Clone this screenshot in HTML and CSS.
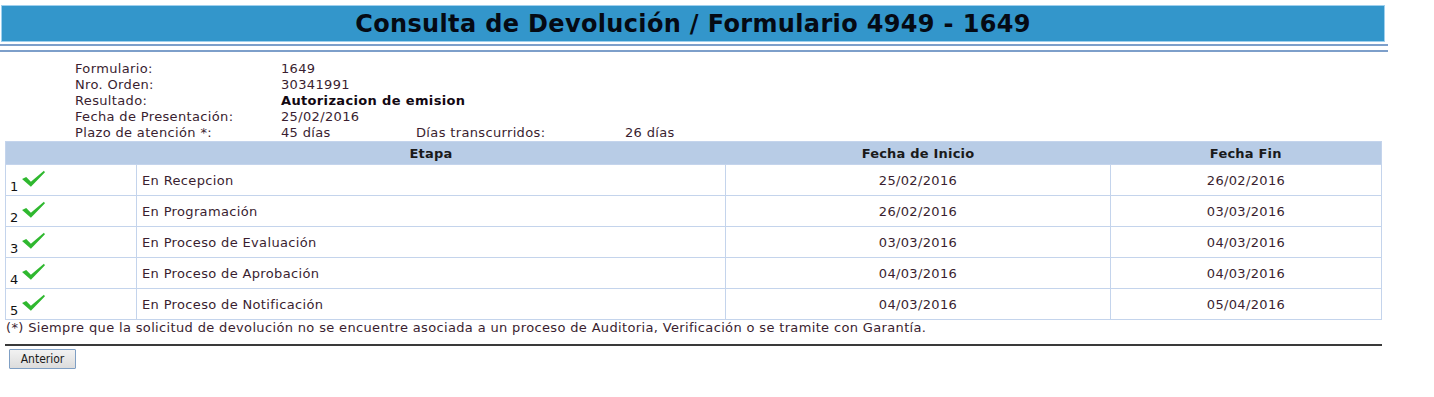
FILE: index.html
```html
<!DOCTYPE html>
<html lang="es">
<head>
<meta charset="utf-8">
<title>Consulta de Devolución</title>
<link rel="stylesheet" href="styles.css">
</head>
<body>
<div class="page">
  <header class="banner">
    <h1 class="title">Consulta de Devolución / Formulario 4949 - 1649</h1>
  </header>
  <div class="rule rule-a"></div>
  <div class="rule rule-b"></div>

  <div class="info">
    <span class="lbl">Formulario:</span><span class="val">1649</span><span></span><span></span>
    <span class="lbl">Nro. Orden:</span><span class="val">30341991</span><span></span><span></span>
    <span class="lbl">Resultado:</span><span class="val strong">Autorizacion de emision</span><span></span><span></span>
    <span class="lbl">Fecha de Presentación:</span><span class="val">25/02/2016</span><span></span><span></span>
    <span class="lbl">Plazo de atención *:</span><span class="val">45 días</span><span class="lbl">Días transcurridos:</span><span class="val">26 días</span>
  </div>

  <table class="stages">
    <colgroup>
      <col class="c-num">
      <col class="c-etapa">
      <col class="c-date">
      <col class="c-date2">
    </colgroup>
    <thead>
      <tr>
        <th></th>
        <th>Etapa</th>
        <th>Fecha de Inicio</th>
        <th>Fecha Fin</th>
      </tr>
    </thead>
    <tbody>
      <tr>
        <td class="num">1<svg class="check" viewBox="0 0 24 18"><path d="M1 9.5 L5 7.5 L9.5 12 L22 1.5 L23 3 L9.5 17 Z"/></svg></td>
        <td>En Recepcion</td><td class="ctr">25/02/2016</td><td class="ctr">26/02/2016</td>
      </tr>
      <tr>
        <td class="num">2<svg class="check" viewBox="0 0 24 18"><path d="M1 9.5 L5 7.5 L9.5 12 L22 1.5 L23 3 L9.5 17 Z"/></svg></td>
        <td>En Programación</td><td class="ctr">26/02/2016</td><td class="ctr">03/03/2016</td>
      </tr>
      <tr>
        <td class="num">3<svg class="check" viewBox="0 0 24 18"><path d="M1 9.5 L5 7.5 L9.5 12 L22 1.5 L23 3 L9.5 17 Z"/></svg></td>
        <td>En Proceso de Evaluación</td><td class="ctr">03/03/2016</td><td class="ctr">04/03/2016</td>
      </tr>
      <tr>
        <td class="num">4<svg class="check" viewBox="0 0 24 18"><path d="M1 9.5 L5 7.5 L9.5 12 L22 1.5 L23 3 L9.5 17 Z"/></svg></td>
        <td>En Proceso de Aprobación</td><td class="ctr">04/03/2016</td><td class="ctr">04/03/2016</td>
      </tr>
      <tr>
        <td class="num">5<svg class="check" viewBox="0 0 24 18"><path d="M1 9.5 L5 7.5 L9.5 12 L22 1.5 L23 3 L9.5 17 Z"/></svg></td>
        <td>En Proceso de Notificación</td><td class="ctr">04/03/2016</td><td class="ctr">05/04/2016</td>
      </tr>
    </tbody>
  </table>

  <p class="note">(*) Siempre que la solicitud de devolución no se encuentre asociada a un proceso de Auditoria, Verificación o se tramite con Garantía.</p>
  <div class="sep"></div>
  <div class="actions">
    <button class="btn" type="button">Anterior</button>
  </div>
</div>
</body>
</html>
```

FILE: styles.css
```css
html, body {
  margin: 0;
  padding: 0;
  background: #ffffff;
}
body {
  font-family: "DejaVu Sans", Verdana, sans-serif;
  font-size: 13px;
  letter-spacing: 0.35px;
  color: #3a1e30;
}
.page {
  width: 1388px;
  padding-top: 5px;
}
.banner {
  margin: 0 3px 0 1px;
  height: 35px;
  background: #3396cb;
  border: 1px solid #9fd0ee;
  display: flex;
  align-items: center;
  justify-content: center;
}
.title {
  margin: 0;
  font-family: "DejaVu Sans", Verdana, sans-serif;
  font-weight: bold;
  font-size: 24px;
  letter-spacing: 0.35px;
  color: #050a14;
}
.rule {
  height: 2px;
  background: #7d9fca;
}
.rule-a {
  margin-top: 2px;
}
.rule-b {
  margin-top: 4px;
}
.info {
  display: grid;
  grid-template-columns: 206px 135px 209px auto;
  grid-auto-rows: 16px;
  line-height: 16px;
  padding: 9px 0 0 75px;
  white-space: nowrap;
}
.info .strong {
  font-weight: bold;
  color: #120812;
}
.stages {
  margin: 0 0 0 5px;
  width: 1377px;
  table-layout: fixed;
  border-collapse: collapse;
  border: 1px solid #c4d4ec;
}
.c-num { width: 131px; }
.c-etapa { width: 589px; }
.c-date { width: 385px; }
.stages th {
  background: #b8cce6;
  height: 22px;
  padding: 0;
  font-family: "DejaVu Sans", Verdana, sans-serif;
  font-weight: bold;
  font-size: 13px;
  letter-spacing: 0.2px;
  color: #1a1a1a;
  text-align: center;
  border: none;
}
.stages td {
  height: 30px;
  padding: 0 0 0 5px;
  border: 1px solid #c4d4ec;
  vertical-align: middle;
}
.stages td.num {
  padding: 0 0 0 4px;
  vertical-align: bottom;
  line-height: 16px;
  color: #111;
}
.check {
  width: 25px;
  height: 19px;
  fill: #2fb82f;
  margin-left: 2px;
  vertical-align: 3px;
}
.stages td.ctr {
  text-align: center;
  padding: 0;
}
.note {
  margin: 0;
  padding: 0 0 0 6px;
  line-height: 16px;
}
.sep {
  margin: 8px 0 0 5px;
  width: 1377px;
  height: 2px;
  background: #3a3a3a;
}
.actions {
  padding: 3px 0 0 9px;
}
.btn {
  width: 67px;
  height: 20px;
  padding: 0;
  font-family: "DejaVu Sans Condensed", "DejaVu Sans", sans-serif;
  font-size: 12px;
  letter-spacing: 0;
  color: #1a1a1a;
  background: linear-gradient(#f2f2f2, #dcdcdc);
  border: 1px solid #7f9fc4;
  border-radius: 1px;
}
```
